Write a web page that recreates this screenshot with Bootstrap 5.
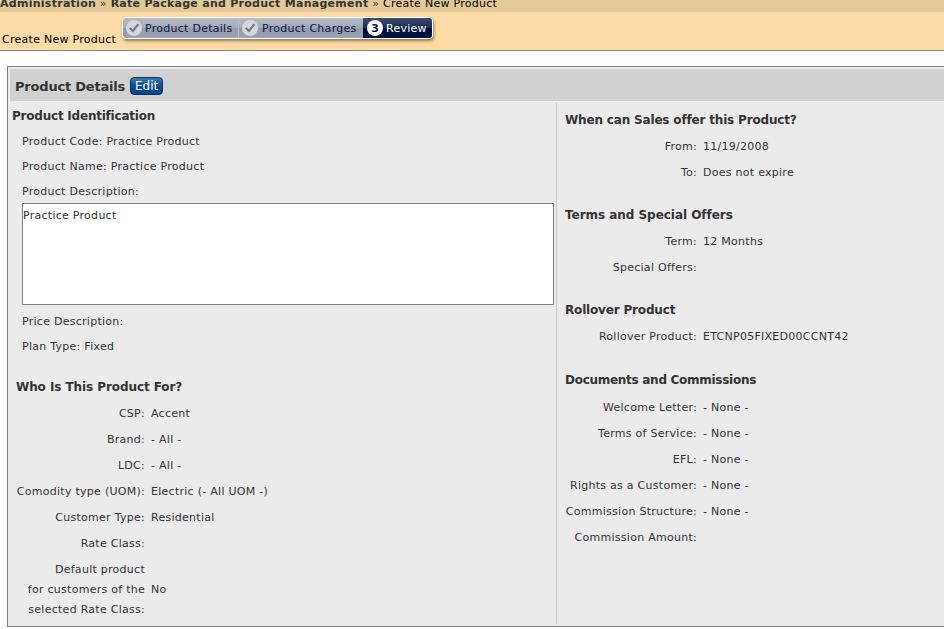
<!DOCTYPE html>
<html lang="en">
<head>
<meta charset="utf-8">
<title>Create New Product</title>
<link href="https://cdn.jsdelivr.net/npm/bootstrap@5.3.0/dist/css/bootstrap.min.css" rel="stylesheet">
<style>
body{font:11px/20px Verdana,"DejaVu Sans",sans-serif;letter-spacing:.27px;color:#333;background:#fff;overflow:hidden;height:629px}
.crumbs{height:12px;background:#e4c998;line-height:14px;white-space:nowrap;align-items:flex-end}
.crumb-text{margin-bottom:1px}
.wizard-bar{height:39px;background:#fddba7;border-bottom:1px solid #808080;color:#000;padding-left:2px}
.page-name{padding-top:18px;width:120px;white-space:nowrap}
.steps{height:22px;margin-top:5px;border:1px solid #fff;border-radius:4px;box-shadow:1px 2px 3px rgba(80,60,20,.6);overflow:hidden;line-height:20px}
.step{background:linear-gradient(#b5bac5 0,#a5aab8 48%,#959bab 52%,#9ca2b1);color:#06163f;padding-left:3px;white-space:nowrap}
.step + .step{border-left:1px solid #b6bac4}
.step svg{margin-right:3px;flex:none;letter-spacing:0}
.step span{padding-top:1px}
.step.w2 svg{margin-right:4px}
.step.now{background:linear-gradient(#3d4d6c 0,#1d2d51 48%,#001138 52%,#00133d);color:#fff;border-left:0;padding-left:4px}
.w1{width:115px}.w2{width:125px}.w3{width:69px}
.panel{margin:15px -10px 0 7px;height:561px;border:1px solid #808080;background:#ebebeb;padding:2px 0 0 2px}
.panel-head{height:32px;background:#d1d1d1;padding:3px 0 0 5px;font-size:13px;letter-spacing:-.2px}
.edit-btn{width:33px;height:18px;margin:-1px 0 0 5px;font-size:12px;line-height:15px;border:1px solid #04316b;border-radius:4px;color:#fff;background:linear-gradient(#3f75ae,#0c5093 50%,#00458a);padding:0;letter-spacing:0}
.col-left{width:547px;margin-top:2px;height:521px;border-right:1px solid #c8c8c8;padding-top:3px}
.sec{font-size:12px;font-weight:700;line-height:20px;margin:19px 0 4px;white-space:nowrap;letter-spacing:-.17px}
.sec-ident{margin:0 0 2px 2px;letter-spacing:-.22px}
.sec-who{margin:19px 0 4px 6px;letter-spacing:-.08px}
.sec-when{margin-top:0}
.sec-terms{letter-spacing:-.04px}
.sec-docs{margin:20px 0 5px;letter-spacing:-.28px}
.line{height:25px;line-height:25px;padding:1px 0 0 12px}
.desc{width:532px;height:102px;margin:0 0 3px 12px;border:1px solid #808080;background:#fff;padding:2px 0 0;line-height:20px}
.kv{padding:3px 0}
.kv dt{font-weight:400;text-align:right;flex:none;white-space:nowrap}
.kv dd{margin:0 0 0 6px;white-space:nowrap}
.col-left dt{width:135px}
.col-right dt{width:132px}
.col-right{padding:9px 0 0 8px}
</style>
<script src="https://cdn.jsdelivr.net/npm/bootstrap@5.3.0/dist/js/bootstrap.bundle.min.js"></script>
</head>
<body>
<nav class="crumbs d-flex overflow-hidden"><div class="crumb-text"><b>Administration</b> » <b>Rate Package and Product Management</b> » <span class="text-black">Create New Product</span></div></nav>
<header class="wizard-bar d-flex align-items-start">
  <div class="page-name">Create New Product</div>
  <div class="steps d-flex">
    <div class="step w1 d-flex align-items-center"><svg width="16" height="16" viewBox="0 0 16 16"><circle cx="8" cy="8" r="8" fill="#d4d7dc"/><path d="M3 8.5l1.8-1.2L6.700 9.500 11.500 3.500l1.800.9L7 12.800z" fill="#6f7890"/></svg><span>Product Details</span></div>
    <div class="step w2 d-flex align-items-center"><svg width="16" height="16" viewBox="0 0 16 16"><circle cx="8" cy="8" r="8" fill="#d4d7dc"/><path d="M3 8.5l1.8-1.2L6.700 9.500 11.500 3.500l1.800.9L7 12.800z" fill="#6f7890"/></svg><span>Product Charges</span></div>
    <div class="step now w3 d-flex align-items-center"><svg width="16" height="16" viewBox="0 0 16 16"><circle cx="8" cy="8" r="8" fill="#fff"/><text x="8" y="12" text-anchor="middle" font-size="11" font-weight="700" fill="#06163f">3</text></svg><span>Review</span></div>
  </div>
</header>
<main class="panel">
  <div class="panel-head d-flex align-items-center"><b>Product Details</b><button type="button" class="edit-btn">Edit</button></div>
  <div class="d-flex align-items-start">
    <section class="col-left flex-shrink-0">
      <h2 class="sec sec-ident">Product Identification</h2>
      <div class="line">Product Code: Practice Product</div>
      <div class="line">Product Name: Practice Product</div>
      <div class="line">Product Description:</div>
      <div class="desc">Practice Product</div>
      <div class="line">Price Description:</div>
      <div class="line">Plan Type: Fixed</div>
      <h2 class="sec sec-who">Who Is This Product For?</h2>
      <dl class="m-0">
        <div class="kv d-flex"><dt>CSP:</dt><dd>Accent</dd></div>
        <div class="kv d-flex"><dt>Brand:</dt><dd>- All -</dd></div>
        <div class="kv d-flex"><dt>LDC:</dt><dd>- All -</dd></div>
        <div class="kv d-flex"><dt>Comodity type (UOM):</dt><dd>Electric (- All UOM -)</dd></div>
        <div class="kv d-flex"><dt>Customer Type:</dt><dd>Residential</dd></div>
        <div class="kv d-flex"><dt>Rate Class:</dt><dd></dd></div>
        <div class="kv d-flex align-items-center"><dt>Default product<br>for customers of the<br>selected Rate Class:</dt><dd>No</dd></div>
      </dl>
    </section>
    <section class="col-right">
      <h2 class="sec sec-when">When can Sales offer this Product?</h2>
      <dl class="m-0">
        <div class="kv d-flex"><dt>From:</dt><dd>11/19/2008</dd></div>
        <div class="kv d-flex"><dt>To:</dt><dd>Does not expire</dd></div>
      </dl>
      <h2 class="sec sec-terms">Terms and Special Offers</h2>
      <dl class="m-0">
        <div class="kv d-flex"><dt>Term:</dt><dd>12 Months</dd></div>
        <div class="kv d-flex"><dt>Special Offers:</dt><dd></dd></div>
      </dl>
      <h2 class="sec">Rollover Product</h2>
      <dl class="m-0">
        <div class="kv d-flex"><dt>Rollover Product:</dt><dd>ETCNP05FIXED00CCNT42</dd></div>
      </dl>
      <h2 class="sec sec-docs">Documents and Commissions</h2>
      <dl class="m-0">
        <div class="kv d-flex"><dt>Welcome Letter:</dt><dd>- None -</dd></div>
        <div class="kv d-flex"><dt>Terms of Service:</dt><dd>- None -</dd></div>
        <div class="kv d-flex"><dt>EFL:</dt><dd>- None -</dd></div>
        <div class="kv d-flex"><dt>Rights as a Customer:</dt><dd>- None -</dd></div>
        <div class="kv d-flex"><dt>Commission Structure:</dt><dd>- None -</dd></div>
        <div class="kv d-flex"><dt>Commission Amount:</dt><dd></dd></div>
      </dl>
    </section>
  </div>
</main>
</body>
</html>
